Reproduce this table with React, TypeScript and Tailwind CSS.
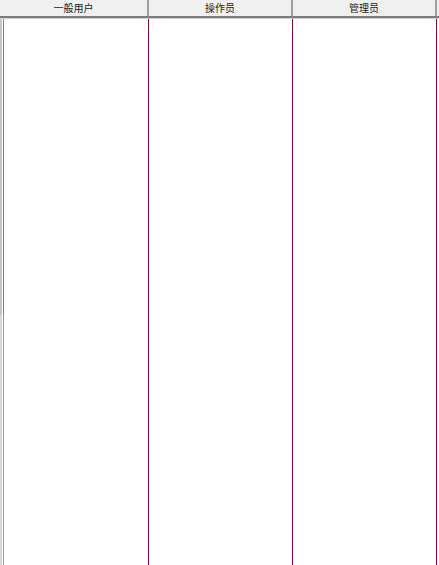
const columns = ["一般用户", "操作员", "管理员"];

export default function App() {
  return (
    <div className="flex h-[565px] w-[439px] flex-col overflow-hidden bg-white font-['Noto_Sans_CJK_SC',sans-serif]">
      <div className="flex h-[18px] shrink-0 border-b-2 border-[#7c7c7c] bg-[#f0f0f0]">
        {columns.map((label, i) => (
          <div
            key={label}
            className={`flex items-center justify-center border-r-2 border-[#a0a0a0] text-[10px] leading-none text-[#1a1a1a] ${
              i === 0 ? "w-[149px]" : "w-[144px]"
            }`}
          >
            {label}
          </div>
        ))}
        <div className="flex-1" />
      </div>
      <div className="h-px shrink-0 bg-[#d4d4d4]" />
      <div className="flex flex-1">
        <div className="flex w-[149px] shrink-0">
          <div className="flex w-[4px] shrink-0 flex-col">
            <div className="h-[296px] border-l-2 border-r border-l-[#c8c8c8] border-r-[#808080]" />
            <div className="flex-1 border-l-2 border-r border-l-[#d8d8d8] border-r-[#a0a0a0]" />
          </div>
          <div className="flex-1 border-r border-[#800040]" />
        </div>
        <div className="w-[144px] shrink-0 border-r border-[#800040]" />
        <div className="w-[144px] shrink-0 border-r border-[#800040]" />
        <div className="flex-1" />
      </div>
    </div>
  );
}
